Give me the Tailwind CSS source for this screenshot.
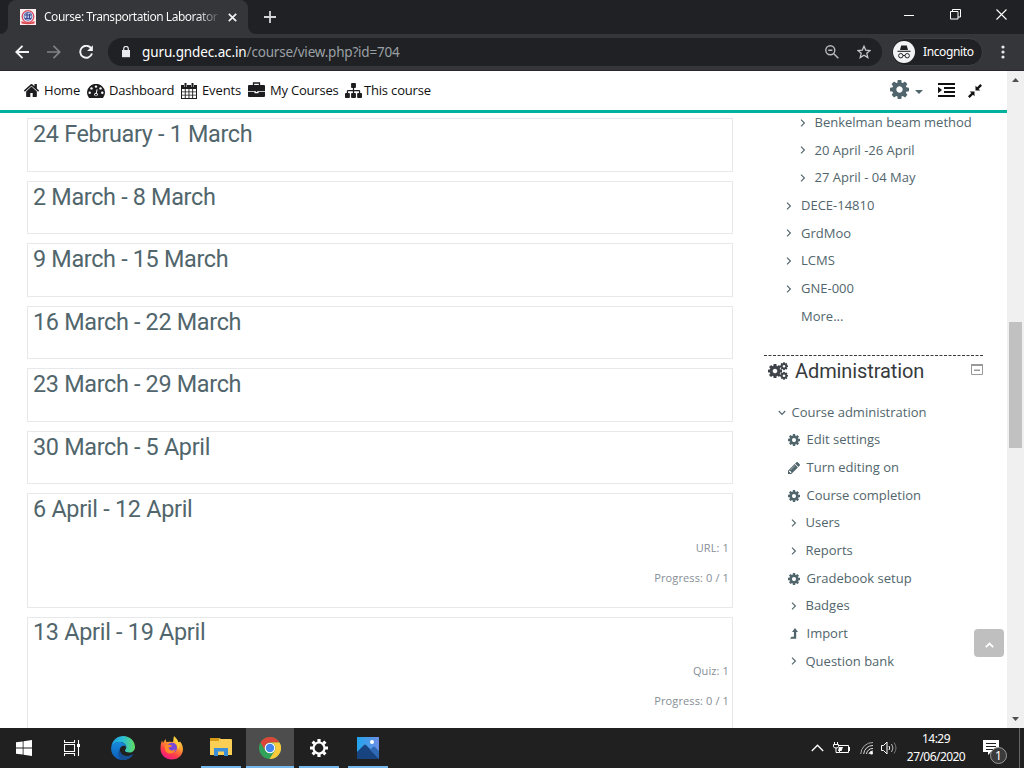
<!DOCTYPE html>
<html lang="en">
<head>
<meta charset="utf-8">
<title>Course: Transportation Laboratory</title>
<script src="https://cdn.jsdelivr.net/npm/@tailwindcss/browser@4"></script>
</head>
<body class="w-[1024px] h-[768px] overflow-hidden flex flex-col bg-white font-['Open_Sans',sans-serif] text-[13px] text-[#51666c] whitespace-nowrap">
<svg class="hidden">
  <symbol id="cog" viewBox="128 128 1536 1536"><path d="M1152 896q0-106-75-181t-181-75-181 75-75 181 75 181 181 75 181-75 75-181zm512-109v222q0 12-8 23t-20 13l-185 28q-19 54-39 91 35 50 107 138 10 12 10 25t-9 23q-27 37-99 108t-94 71q-12 0-26-9l-138-108q-44 23-91 38-16 136-29 186-7 28-36 28h-222q-14 0-24.500-8.500t-11.500-21.500l-28-184q-49-16-90-37l-141 107q-10 9-25 9-14 0-25-11-126-114-165-168-7-10-7-23 0-12 8-23 15-21 51-66.500t54-70.500q-27-50-41-99l-183-27q-13-2-21-12.500t-8-23.500v-222q0-12 8-23t19-13l186-28q14-46 39-92-40-57-107-138-10-12-10-24 0-10 9-23 26-36 98.500-107.500t94.500-71.500q13 0 26 10l138 107q44-23 91-38 16-136 29-186 7-28 36-28h222q14 0 24.500 8.500t11.500 21.500l28 184q49 16 90 37l142-107q9-9 24-9 13 0 25 10 129 119 165 170 7 8 7 22 0 12-8 23-15 21-51 66.500t-54 70.500q26 50 41 98l183 28q13 2 21 12.500t8 23.500z"/></symbol>
  <symbol id="chev" viewBox="0 0 6 8"><path d="M1 .7L4.400 4 1 7.300" fill="none" stroke="currentColor" stroke-width="1.150"/></symbol>
</svg>

<!-- Tab strip -->
<div class="h-[34px] shrink-0 bg-[#202124] flex items-end pl-2 text-white font-['Noto_Sans',sans-serif]">
  <div class="relative w-[240px] h-[34px] bg-[#35363a] rounded-t-[8px] flex items-center pl-3">
    <svg class="absolute -left-2 bottom-0" width="8" height="8"><path d="M8 0v8H0a8 8 0 0 0 8-8z" fill="#35363a"/></svg>
    <svg class="absolute -right-2 bottom-0" width="8" height="8"><path d="M0 0v8h8a8 8 0 0 1-8-8z" fill="#35363a"/></svg>
    <svg width="16" height="16" class="shrink-0"><path d="M0 0h16v16H0z" fill="#fbeff0"/><circle cx="8" cy="7.500" r="5.800" fill="#eef" stroke="#d44c58" stroke-width="1.300"/><circle cx="8" cy="7.300" r="4" fill="#cfd4ec" stroke="#586bab"/><path d="M5 6h6M7 4v6M9.500 5v5M5 9.500h6" stroke="#394a91" stroke-width="1.200"/><path d="M1.500 12q6.500 3 13 0v2.500q-6.500 1.500-13 0z" fill="#dc4650"/></svg>
    <div class="ml-2 w-[175px] text-[12px] tracking-[-0.470px] bg-linear-to-r from-white from-88% to-[#4a4b4f] to-100% bg-clip-text text-transparent">Course: Transportation Laborator</div>
    <svg class="ml-[9px]" width="9" height="9"><path d="M.8.8l7.400 7.400M8.200.8L.8 8.200" stroke="#f1f1f1" stroke-width="1.700"/></svg>
  </div>
  <svg class="ml-4 mb-[11px]" width="12" height="12"><path d="M6 0v12M0 6h12" stroke="#d5d6d8" stroke-width="1.800"/></svg>
  <div class="ml-auto flex items-center mb-[14px]">
    <svg width="10" height="11"><path d="M0 6.500h10" stroke="#fff"/></svg>
    <svg class="ml-9" width="11" height="11"><path d="M.5 2.500h7.500v7.500H.5zM2.500 2.500V.5h8v7.500H8" fill="none" stroke="#fff"/></svg>
    <svg class="ml-[35px] mr-[17px]" width="11" height="11"><path d="M.5.5l10 10M10.500.5l-10 10" stroke="#fff" stroke-width="1.100"/></svg>
  </div>
</div>

<!-- Address bar -->
<div class="h-[37px] shrink-0 bg-[#35363a] border-b border-[#29272b] flex items-center pl-[15px] font-['Noto_Sans',sans-serif]">
  <svg width="14" height="14"><path d="M14 7H1.500M7.500.8L1.300 7l6.200 6.200" fill="none" stroke="#f1f3f4" stroke-width="1.900"/></svg>
  <svg class="ml-[18px]" width="14" height="14"><path d="M0 7h12.500M6.500.8L12.700 7l-6.200 6.200" fill="none" stroke="#828386" stroke-width="1.700"/></svg>
  <svg class="ml-[18px]" width="14" height="14"><path d="M12.300 3.500A6 6 0 1 0 13 8.500" fill="none" stroke="#f1f3f4" stroke-width="1.900"/><path d="M13.900.2V6H8.100z" fill="#f1f3f4"/></svg>
  <div class="ml-[15px] w-[774px] h-7 rounded-full bg-[#202124] flex items-center text-[13.500px] text-[#9aa0a6]">
    <svg class="ml-[14px] mr-3" width="8" height="12" viewBox="0 0 8 12"><path d="M0 4h8v7.200H0z" fill="#e8eaed"/><path d="M1.700 4V2.700a2.300 2.300 0 0 1 4.600 0V4" fill="none" stroke="#e8eaed" stroke-width="1.200"/></svg>
    <div class="text-[13.500px]"><span class="text-white tracking-[-0.110px]">guru.gndec.ac.in</span><span class="text-[#9aa0a6] tracking-[-0.200px]">/course/view.php?id=704</span></div>
    <svg class="ml-auto" width="14" height="14"><circle cx="5.300" cy="5.300" r="4.500" fill="none" stroke="#b8babd" stroke-width="1.400"/><path d="M3.200 5.300h4.200M8.800 8.800l4.500 4.500" stroke="#b8babd" stroke-width="1.500"/></svg>
    <svg class="ml-[18px] mr-[11px]" width="14" height="14" viewBox="0 0 14 14"><path d="M7 1.200l1.700 3.900 4.300.4-3.200 2.800 1 4.300L7 10.300l-3.800 2.300 1-4.300L1 5.500l4.300-.4z" fill="none" stroke="#c5c7ca" stroke-width="1.300"/></svg>
  </div>
  <div class="ml-[9px] w-[92px] h-7 rounded-full bg-[#202124] border border-[#3f4044] flex items-center text-white text-[12px]">
    <svg class="ml-px" width="22" height="22"><circle cx="11" cy="11" r="11" fill="#f1f3f4"/><path d="M7 9l1.200-4.500h5.600L15 9z" fill="#202124"/><path d="M4.500 10.300h13" stroke="#202124" stroke-width="1.100"/><g fill="none" stroke="#202124"><circle cx="7.800" cy="14.700" r="2.200"/><circle cx="14.200" cy="14.700" r="2.200"/><path d="M10 14.500h2"/></g></svg>
    <span class="ml-2 tracking-[-0.380px]">Incognito</span>
  </div>
  <svg class="ml-[17.500px]" width="4" height="14" fill="#e8eaed"><circle cx="2" cy="2" r="1.600"/><circle cx="2" cy="7" r="1.600"/><circle cx="2" cy="12" r="1.600"/></svg>
</div>

<div class="flex h-[657px] shrink-0">
  <div class="w-[1007px] flex flex-col">
    <!-- Site navigation -->
    <div class="h-[42px] shrink-0 border-b-[3px] border-[#00b19d] flex items-center pl-6 text-[#111]">
      <svg width="15" height="13" viewBox="89 253 1614 1283" preserveAspectRatio="none" fill="#1d1d1f"><path d="M1472 992v480q0 26-19 45t-45 19h-384v-384h-256v384h-384q-26 0-45-19t-19-45v-480q0-1 .5-3t.5-3l575-474 575 474q1 2 1 6zm223-69l-62 74q-8 9-21 11h-3q-13 0-21-7l-692-577-692 577q-12 8-24 7-13-2-21-11l-62-74q-8-10-7-23.500t11-21.500l719-599q32-26 76-26t76 26l244 204v-195q0-14 9-23t23-9h192q14 0 23 9t9 23v408l219 182q10 8 11 21.500t-7 23.500z"/></svg>
      <span class="ml-[5px] w-[43px] tracking-[-0.150px]">Home</span>
      <svg class="mt-px" width="18" height="14" viewBox="0 0 18 14"><path d="M2 14A9 8.700 0 1 1 16 14z" fill="#1d1d1f"/><g fill="#fff"><circle cx="9" cy="2.600" r="1.200"/><circle cx="4.500" cy="4.400" r="1.200"/><circle cx="13.500" cy="4.400" r="1.200"/><circle cx="2.700" cy="8.700" r="1.200"/><circle cx="15.300" cy="8.700" r="1.200"/><circle cx="9" cy="10.500" r="1.800"/></g><path d="M9 10.500l1.100-5.200" stroke="#fff" stroke-width="1"/><circle cx="9" cy="10.700" r="1" fill="#1d1d1f"/></svg>
      <span class="ml-[4px] w-[72px] tracking-[-0.200px]">Dashboard</span>
      <svg width="16" height="16" viewBox="0 0 16 16"><path d="M0 2h16v14H0z" fill="#1d1d1f"/><path d="M1 6h2.800v2.500H1zM4.700 6h2.800v2.500H4.700zM8.400 6h2.800v2.500H8.400zM12.100 6H15v2.500h-2.900zM1 9.300h2.800v2.500H1zM4.700 9.300h2.800v2.500H4.700zM8.400 9.300h2.800v2.500H8.400zM12.100 9.300H15v2.500h-2.900zM1 12.600h2.800v2.400H1zM4.700 12.600h2.800v2.400H4.700zM8.400 12.600h2.800v2.400H8.400zM12.100 12.600H15v2.400h-2.900z" fill="#fff"/><path d="M4.500 0v4M11.500 0v4" stroke="#fff" stroke-width="3"/><path d="M4.500 0v4M11.500 0v4" stroke="#1d1d1f" stroke-width="2"/></svg>
      <span class="ml-[5px] w-[46px] tracking-[-0.100px]">Events</span>
      <svg class="-mt-[2px]" width="17" height="15" viewBox="0 0 17 15"><path d="M5.500 3V1h6v2" fill="none" stroke="#1d1d1f" stroke-width="1.300"/><path d="M1 3h15q1 0 1 1v5.300H0V4q0-1 1-1zM0 10h6.500v1.200h4V10H17v4q0 1-1 1H1q-1 0-1-1z" fill="#1d1d1f"/><path d="M6.800 9h3.400v2H6.800z" fill="#fff"/><path d="M7.700 8.500h1.600v1.500H7.700z" fill="#1d1d1f"/></svg>
      <span class="ml-[5px] w-[75px] tracking-[-0.200px]">My Courses</span>
      <svg width="17" height="15" viewBox="0 128 1792 1536" preserveAspectRatio="none" fill="#1d1d1f"><path d="M1792 1248v320q0 40-28 68t-68 28h-320q-40 0-68-28t-28-68v-320q0-40 28-68t68-28h96v-192h-512v192h96q40 0 68 28t28 68v320q0 40-28 68t-68 28h-320q-40 0-68-28t-28-68v-320q0-40 28-68t68-28h96v-192h-512v192h96q40 0 68 28t28 68v320q0 40-28 68t-68 28h-320q-40 0-68-28t-28-68v-320q0-40 28-68t68-28h96v-192q0-52 38-90t90-38h512v-192h-96q-40 0-68-28t-28-68v-320q0-40 28-68t68-28h320q40 0 68 28t28 68v320q0 40-28 68t-68 28h-96v192h512q52 0 90 38t38 90v192h96q40 0 68 28t28 68z"/></svg>
      <span class="ml-[2px] tracking-[-0.180px]">This course</span>
      <svg class="ml-auto -mt-[2px] text-[#51666c] fill-current" width="19" height="19"><use href="#cog"/></svg>
      <svg class="ml-[6px] mt-[2px]" width="8" height="4"><path d="M0 0h8L4 4z" fill="#51666c"/></svg>
      <svg class="ml-[15px] -mt-px" width="17" height="14"><path d="M0 1h17M6 5h11M6 9h11M0 13h17" stroke="#111" stroke-width="2"/><path d="M0 3.700v6.600L4 7z" fill="#111"/></svg>
      <svg class="ml-[13px] mr-[25px]" width="14" height="14" fill="#111"><path d="M7.500 6.500V1.700l1.600 1.600L12.300 0 14 1.700l-3.300 3.200 1.600 1.600zM6.500 7.500v4.800l-1.600-1.600L1.700 14 0 12.300l3.300-3.200-1.600-1.600z"/></svg>
    </div>
    <!-- Course content -->
    <div class="h-[615px] overflow-hidden flex pl-[27px]">
      <main class="w-[706px] pt-[5px] flex flex-col gap-[9px] shrink-0 font-['Roboto',sans-serif] text-[23.400px] leading-[30px] tracking-[-0.320px]">
        <section class="h-[53.500px] shrink-0 border border-[#e7e8ea] pl-[5px]">24 February - 1 March</section>
        <section class="h-[53.500px] shrink-0 border border-[#e7e8ea] pl-[5px]">2 March - 8 March</section>
        <section class="h-[53.500px] shrink-0 border border-[#e7e8ea] pl-[5px]">9 March - 15 March</section>
        <section class="h-[53.500px] shrink-0 border border-[#e7e8ea] pl-[5px]">16 March - 22 March</section>
        <section class="h-[53.500px] shrink-0 border border-[#e7e8ea] pl-[5px]">23 March - 29 March</section>
        <section class="h-[53.500px] shrink-0 border border-[#e7e8ea] pl-[5px]">30 March - 5 April</section>
        <section class="h-[115px] shrink-0 border border-[#e7e8ea] pl-[5px] pr-[3px] tracking-[-0.280px]">6 April - 12 April
          <div class="mt-[9px] text-right font-['Open_Sans',sans-serif] text-[11px] tracking-[0.120px] text-[#868e96]"><p>URL: 1</p><p>Progress: 0 / 1</p></div>
        </section>
        <section class="h-[115px] shrink-0 border border-[#e7e8ea] pl-[5px] pr-[3px] leading-[29px] tracking-[-0.280px]">13 April - 19 April
          <div class="mt-[9px] text-right font-['Open_Sans',sans-serif] text-[11px] leading-[30px] tracking-[0.120px] text-[#868e96]"><p>Quiz: 1</p><p>Progress: 0 / 1</p></div>
        </section>
      </main>
      <aside class="ml-[31px] w-[219px] shrink-0">
        <ul class="-mt-[4px] pl-[22px] *:h-[27.670px] *:flex *:items-center">
          <li class="pl-[13.500px]"><svg class="mr-[9px]" width="6" height="8"><use href="#chev"/></svg>Benkelman beam method</li>
          <li class="pl-[13.500px]"><svg class="mr-[9px]" width="6" height="8"><use href="#chev"/></svg>20 April -26 April</li>
          <li class="pl-[13.500px]"><svg class="mr-[9px]" width="6" height="8"><use href="#chev"/></svg>27 April - 04 May</li>
          <li><svg class="mr-[9px]" width="6" height="8"><use href="#chev"/></svg>DECE-14810</li>
          <li><svg class="mr-[9px]" width="6" height="8"><use href="#chev"/></svg>GrdMoo</li>
          <li><svg class="mr-[9px]" width="6" height="8"><use href="#chev"/></svg>LCMS</li>
          <li><svg class="mr-[9px]" width="6" height="8"><use href="#chev"/></svg>GNE-000</li>
          <li class="pl-[15px]">More...</li>
        </ul>
        <svg class="mt-[25px] block" width="219" height="1"><path d="M0 .5h219" stroke="#373a3c" stroke-dasharray="3 1.500"/></svg>
        <div class="h-[30px] flex items-center pl-1 text-[#373a3c] font-['Roboto',sans-serif] text-[20px]">
          <svg width="20" height="18" fill="#3e444a" stroke="#3e444a" stroke-width="20"><use href="#cog" x="0" y="2" width="14" height="14"/><use href="#cog" x="12" y="0" width="8" height="8.500"/><use href="#cog" x="12" y="9.500" width="8" height="8.500"/></svg>
          <h2 class="ml-[7px] tracking-[-0.100px]">Administration</h2>
          <svg class="ml-auto mb-[3px]" width="12" height="11"><path d="M.5.5h11v10H.5z" fill="none" stroke="#999"/><path d="M0 0h12v2H0zM3 5.500h6v1.500H3z" fill="#999"/></svg>
        </div>
        <ul class="mt-[12.500px] pl-[24px] *:h-[27.670px] *:flex *:items-center">
          <li class="-ml-[10px]"><svg class="mr-[5.500px]" width="8" height="6"><path d="M.8 1L4 4.400 7.200 1" fill="none" stroke="currentColor" stroke-width="1.150"/></svg>Course administration</li>
          <li><svg class="mr-[6.500px] fill-current" width="12" height="12"><use href="#cog"/></svg>Edit settings</li>
          <li><svg class="mr-[6.500px] fill-current" width="12" height="12" viewBox="128 149 1515 1515"><path d="M491 1536l91-91-235-235-91 91v107h128v128h107zm523-928q0-22-22-22-10 0-17 7l-542 542q-7 7-7 17 0 22 22 22 10 0 17-7l542-542q7-7 7-17zm-54-192l416 416-832 832h-416v-416zm683 96q0 53-37 90l-166 166-416-416 166-165q36-38 90-38 53 0 91 38l235 234q37 39 37 91z"/></svg>Turn editing on</li>
          <li><svg class="mr-[6.500px] fill-current" width="12" height="12"><use href="#cog"/></svg>Course completion</li>
          <li class="pl-[2.500px]"><svg class="mr-[9px]" width="6" height="8"><use href="#chev"/></svg>Users</li>
          <li class="pl-[2.500px]"><svg class="mr-[9px]" width="6" height="8"><use href="#chev"/></svg>Reports</li>
          <li><svg class="mr-[6.500px] fill-current" width="12" height="12"><use href="#cog"/></svg>Gradebook setup</li>
          <li class="pl-[2.500px]"><svg class="mr-[9px]" width="6" height="8"><use href="#chev"/></svg>Badges</li>
          <li class="pl-[2px]"><svg class="mr-[8.500px] fill-current" width="8" height="11"><path d="M0 10.800h6.200V4H8L5 0 2 4h1.900v4.800H1.500z"/></svg>Import</li>
          <li class="pl-[2.500px]"><svg class="mr-[9px]" width="6" height="8"><use href="#chev"/></svg>Question bank</li>
        </ul>
      </aside>
    </div>
  </div>
  <!-- Scrollbar -->
  <div class="w-[17px] bg-[#f0f0f0] flex flex-col items-center">
    <svg class="mt-[7px]" width="7" height="4"><path d="M0 4h7L3.500 0z" fill="#505050"/></svg>
    <div class="mt-[240px] w-[13px] h-[126px] bg-[#c1c1c1]"></div>
    <svg class="mt-auto mb-[7px]" width="7" height="4"><path d="M0 0h7L3.500 4z" fill="#505050"/></svg>
  </div>
</div>
<button class="absolute left-[974px] top-[629px] w-[30px] h-7 rounded-[4px] bg-[#bfbfbf] flex items-center justify-center"><svg class="mt-[3px]" width="9" height="6"><path d="M.8 5.200L4.500 1.500l3.700 3.700" fill="none" stroke="#fff" stroke-width="1.800"/></svg></button>

<!-- Taskbar -->
<div class="h-10 shrink-0 bg-[#202020] flex items-center text-white font-['Noto_Sans',sans-serif]">
  <svg class="ml-4" width="16" height="16" fill="#fff"><path d="M0 2.300L6.700 1.400v6.200H0zM7.500 1.300L16 0v7.600H7.500zM0 8.400h6.700v6.200L0 13.700zM7.500 8.400H16V16l-8.500-1.200z"/></svg>
  <svg class="ml-8" width="16" height="16" fill="none" stroke="#fff" stroke-width="1.100"><path d="M.5 4.500h10v7H.5zM.5 0v2.500h10V0M.5 16v-2.500h10V16M14.500 0v16"/><path d="M13 4h3v3h-3z" fill="#fff" stroke="none"/></svg>
  <svg class="ml-[31px]" width="24" height="24" viewBox="0 0 24 24"><defs><linearGradient id="e1" x1="0" x2="1"><stop stop-color="#1b9de2"/><stop offset=".5" stop-color="#2bbfd5"/><stop offset="1" stop-color="#61dc61"/></linearGradient><linearGradient id="e2" x1="0" y1="0" x2="0" y2="1"><stop stop-color="#188bdd"/><stop offset="1" stop-color="#0b5cb8"/></linearGradient></defs><path d="M.3 10.500C1.500 4 6.500 0 12.200 0 19 0 24 5 24 11c0 3.500-2.500 5.500-5.500 5.500-3 0-4.500-1-4.500-2s1.300-1.500 1.300-3.500C15.300 8 12 6 8.500 6 5 6 2 8 .3 10.500z" fill="url(#e1)"/><path d="M.2 11.500C1 8 4.500 6 8.300 6c4 0 7 2.500 7 5.200-1-1.200-2.500-1.700-3.800-1.200-2 .7-3.300 3-2.500 5.500 1 3.500 5 5.300 9 4.500l4-1.500C20 22 16.500 24 12 24 5 24-.5 18.500.2 11.500z" fill="url(#e2)"/><path d="M8.800 13c-.2 5 4 8 9.200 7l4-1.700c-2 3.500-5.500 5.700-10 5.700-4-1-6.500-6.500-3.200-11z" fill="#174f93"/></svg>
  <svg class="ml-[25px]" width="24" height="24" viewBox="0 0 24 24"><defs><linearGradient id="f1" x1=".8" y1="0" x2=".25" y2="1"><stop stop-color="#ffe14b"/><stop offset=".4" stop-color="#ff9a2e"/><stop offset=".7" stop-color="#ff3e48"/><stop offset="1" stop-color="#ed148b"/></linearGradient></defs><path d="M2 4.500l1 2.500 2.500-4 .8 3 3.500-.3L13 6l1-5.800C16 1.500 18 4 18.500 6.500L20 5.500c2.200 2.500 3.500 6 2.800 9.500-1 5-5.500 8.500-11 8.500C5.500 23.500.5 19 .5 12.500.5 9.500 1 7 2 4.500z" fill="url(#f1)"/><circle cx="12" cy="11.800" r="5" fill="#7849d8"/><path d="M4.500 9.500C7 8 10 8.800 12 9.500c-.5 1.500-2 1.500-3.500 2 .3 3.500 4.500 4 7 1.500C15 18 8 19 5.500 15z" fill="#ff8b28"/><path d="M14 .2C12.500 6 19 7 17.500 13c3-1 2-5 1-6.500z" fill="#ffd13c"/></svg>
  <div class="ml-[17px] w-10 h-10 border-b-2 border-[#76b9ed] flex items-center justify-center"><svg width="22" height="18"><path d="M0 1q0-1 1-1h8l2 1h10q1 0 1 1v15H0z" fill="#fbcf55"/><path d="M0 0h9v3H0z" fill="#d99c16"/><path d="M4 18v-8h14v8h-4v-4.500H8V18z" fill="#3b8fd8"/></svg></div>
  <div class="ml-[5px] w-12 h-10 border-b-2 border-[#76b9ed] bg-[#4d4d4d] flex items-center justify-center pt-px"><svg width="22" height="22" viewBox="0 0 22 22"><circle cx="11" cy="11" r="11" fill="#32a25b"/><path d="M1.500 5.500A11 11 0 0 1 20.500 5.500H11A5.500 5.500 0 0 0 6 9z" fill="#dc4638"/><path d="M1.500 5.500L6.300 13.700A5.500 5.500 0 0 1 11 5.500z" fill="#dc4638"/><path d="M20.500 5.500A11 11 0 0 1 10.500 22l5.300-8.300A5.500 5.500 0 0 0 11 5.500z" fill="#fbcb3e"/><circle cx="11" cy="11" r="5.300" fill="#fff"/><circle cx="11" cy="11" r="4.200" fill="#4385ef"/></svg></div>
  <div class="ml-[5px] w-10 h-10 border-b-2 border-[#76b9ed] flex items-center justify-center pt-px"><svg width="18" height="18" viewBox="-9 -9 18 18" fill="none" stroke="#fff"><circle r="5.500" stroke-width="2.200"/><g stroke-width="3.200"><path d="M0-9v3M0 9V6M-9 0h3M9 0H6M-6.400-6.400l2 2M6.400-6.400l-2 2M-6.400 6.400l2-2M6.400 6.400l-2-2"/></g></svg></div>
  <div class="ml-[9px] w-10 h-10 border-b-2 border-[#76b9ed] flex items-center justify-center pt-px"><svg width="22" height="22"><defs><linearGradient id="p"><stop stop-color="#22a5ee"/><stop offset="1" stop-color="#6d8ee5"/></linearGradient></defs><path d="M0 0h22v22H0z" fill="url(#p)"/><path d="M0 15l7-7q1-1 2 0l13 13v1H0z" fill="#17447f"/><path d="M13 13l3-3q1-1 2 0l4 4v8z" fill="#306ab4"/><circle cx="15" cy="5" r="2" fill="#fff"/></svg></div>
  <svg class="ml-auto" width="13" height="8"><path d="M.8 7L6.500 1.200 12.200 7" fill="none" stroke="#fff" stroke-width="1.300"/></svg>
  <svg class="ml-[9px]" width="17" height="12" fill="none" stroke="#fff"><path d="M6 3.500h9.500v7h-9v-2M16.500 5v4M1.500 0v2.500M4.500 0v2.500M.5 2.500h5v2q0 1.500-2.500 1.500T.5 4.500zM3 6v4.500h3.500"/><path d="M6 5h4L8.500 9H5z" fill="#fff" stroke="none"/></svg>
  <svg class="ml-[10px]" width="14" height="14" fill="none"><g stroke="#aaa"><path d="M.7 13A12 12 0 0 1 13 1.500"/><path d="M3.700 13A9 9 0 0 1 13 4.500M6.500 13A6 6 0 0 1 13 7.500" stroke="#ddd"/><path d="M9 13a4 4 0 0 1 4-3" stroke="#fff"/></g><circle cx="11.500" cy="12" r="1.500" fill="#fff"/></svg>
  <svg class="ml-[7px]" width="16" height="14" fill="none" stroke="#fff"><path d="M.5 4.500h2L6 1v12L2.500 9.500h-2z"/><path d="M8 5q1.500 2 0 4"/><path d="M10.500 3q3 4 0 8" stroke="#bbb"/><path d="M13 1.500q4 5.500 0 11" stroke="#777"/></svg>
  <div class="ml-[9px] w-[60px] text-center text-[12px] leading-[18px] tracking-[-0.500px]"><div>14:29</div><div class="-mx-1 tracking-[-0.550px]">27/06/2020</div></div>
  <div class="relative ml-[17px] mr-[9px] w-[27px] h-[27px]">
    <svg class="absolute left-0 top-[5px]" width="17" height="16"><path d="M0 0h16v12H8l-3 3v-3H0z" fill="#fff"/><path d="M3 3.500h10M3 6.500h10M3 9.500h7" stroke="#202020"/></svg>
    <div class="absolute left-[7px] top-[12px] w-[17px] h-[17px] rounded-full bg-[#3b3b3b] border border-[#999] text-[12px] leading-[15px] text-center">1</div>
  </div>
  <div class="w-px h-10 mr-[4px] bg-[#666]"></div>
</div>
</body>
</html>
